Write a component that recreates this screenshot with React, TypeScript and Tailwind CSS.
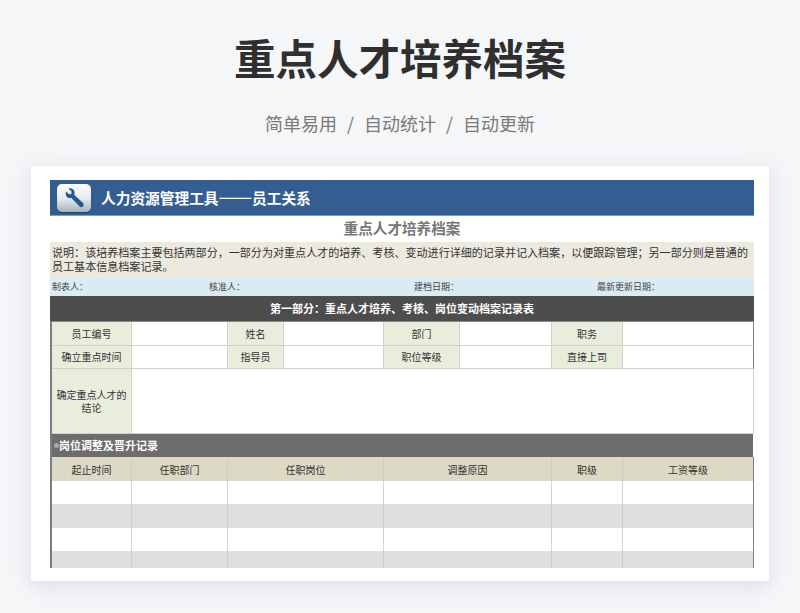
const labelCell = "flex items-center justify-center bg-[#e9eddc] border-r border-b border-[#d0d0d0] text-[10px] text-[#333333] text-center leading-[13.5px]";
const blankCell = "bg-white border-r border-b border-[#d0d0d0]";
const lastCell = "bg-white border-r border-r-[#7d7d7d] border-b border-b-[#d0d0d0]";

const WrenchIcon = () => (
  <div className="w-[34px] h-[28px] rounded-[5px] bg-gradient-to-b from-[#fbfcfd] via-[#e6ebf0] to-[#a9b4be] flex items-center justify-center shadow-[0_1px_1px_rgba(0,0,0,0.35)]">
    <svg width="22" height="22" viewBox="0 0 22 22">
      <path
        d="M3 4.5 L6.5 7.5 L8.5 6.5 L8.5 4.5 L5.5 1.5 C8 0.8 11 2 11.5 5 C11.7 6.2 11.5 7 11.2 7.8 L20 16 C21 17.2 20.8 18.6 20 19.6 C19 20.6 17.6 20.6 16.6 19.6 L8.2 10.8 C7.2 11.2 6 11.2 5 10.8 C3 10 2.4 7 3 4.5 Z"
        fill="#1f5a94"
      />
    </svg>
  </div>
);

const historyColumns = [
  { label: "起止时间", span: "col-span-1" },
  { label: "任职部门", span: "col-span-1" },
  { label: "任职岗位", span: "col-span-2" },
  { label: "调整原因", span: "col-span-2" },
  { label: "职级", span: "col-span-1" },
  { label: "工资等级", span: "col-span-1" },
];

const gridCols = "grid grid-cols-[80px_96px_56px_100px_76px_92px_71px_131px]";

const App = () => {
  return (
    <div
      className="w-[800px] h-[613px] overflow-hidden bg-[#f5f6f8] flex flex-col items-center"
      style={{ fontFamily: '"Noto Sans CJK SC", "Noto Sans", sans-serif' }}
    >
      <h1 className="mt-[27px] h-[60px] leading-[60px] text-[41.5px] font-bold text-[#2f2f2f]">重点人才培养档案</h1>
      <div className="mt-[22px] h-[28px] leading-[28px] flex gap-[10px] text-[18px] text-[#7a7a7a]">
        <span>简单易用</span>
        <span>/</span>
        <span>自动统计</span>
        <span>/</span>
        <span>自动更新</span>
      </div>

      <div className="mt-[29px] w-[738px] h-[415px] bg-white shadow-[0_4px_18px_rgba(150,160,175,0.3)] pt-[14px] pl-[19px]">
        <div className="w-[704px] h-[388px] overflow-hidden">
          <div className="h-[36px] bg-[#345e92] flex items-center pl-[7px] border-b border-[#7f9dbd]">
            <WrenchIcon />
            <span className="ml-[10px] text-[14.7px] font-bold text-white">
              人力资源管理工具<span className="text-[20px] leading-none font-normal">——</span>员工关系
            </span>
          </div>

          <div className="h-[26px] flex items-center justify-center text-[14.6px] font-bold text-[#777777] pb-[2px]">重点人才培养档案</div>

          <div className="h-[36px] bg-[#ece9df] px-[2px] pt-[3px] text-[11.05px] leading-[14px] text-[#333333]">
            说明：该培养档案主要包括两部分，一部分为对重点人才的培养、考核、变动进行详细的记录并记入档案，以便跟踪管理；另一部分则是普通的员工基本信息档案记录。
          </div>

          <div className="h-[18px] bg-[#daebf3] relative flex items-center pl-[2px] text-[9px] text-[#444444]">
            <span className="w-[157px]">制表人：</span>
            <span className="w-[205px]">核准人：</span>
            <span className="w-[183px]">建档日期：</span>
            <span>最新更新日期：</span>
          </div>

          <div className="h-[26px] bg-[#4d4d4d] flex items-center justify-center text-[11px] font-bold text-white border-b border-[#8a8a8a]">
            第一部分：重点人才培养、考核、岗位变动档案记录表
          </div>

          <div className="border-l-2 border-[#7d7d7d]">
            <div className={`${gridCols} grid-rows-[24px_23px_65px]`}>
              <div className={labelCell}>员工编号</div>
              <div className={blankCell} />
              <div className={labelCell}>姓名</div>
              <div className={blankCell} />
              <div className={labelCell}>部门</div>
              <div className={blankCell} />
              <div className={labelCell}>职务</div>
              <div className={lastCell} />

              <div className={labelCell}>确立重点时间</div>
              <div className={blankCell} />
              <div className={labelCell}>指导员</div>
              <div className={blankCell} />
              <div className={labelCell}>职位等级</div>
              <div className={blankCell} />
              <div className={labelCell}>直接上司</div>
              <div className={lastCell} />

              <div className={`${labelCell} px-[3px]`}>确定重点人才的结论</div>
              <div className="col-span-7 bg-white border-r border-b border-[#d0d0d0]" />
            </div>

            <div className="h-[23px] mr-[1px] bg-[#6d6d6d] flex items-center pl-[2px] text-[11px] font-bold text-white">
              <span className="w-[5px] h-[5px] rounded-full bg-[#a9a9a9]" />
              <span>岗位调整及晋升记录</span>
            </div>

            <div className={`${gridCols} grid-rows-[24px_23px_24px_23px_18px]`}>
              {historyColumns.map((col, i) => (
                <div
                  key={col.label}
                  className={
                    i === 5
                      ? `${col.span} flex items-center justify-center bg-[#dcd9c5] border-r border-[#7d7d7d] text-[10px] text-[#333333]`
                      : `${col.span} flex items-center justify-center bg-[#dcd9c5] border-r border-[#cfccb8] text-[10px] text-[#333333]`
                  }
                >
                  {col.label}
                </div>
              ))}
              {[0, 1, 2, 3].map((row) =>
                historyColumns.map((col, i) => (
                  <div
                    key={`${row}-${col.label}`}
                    className={
                      i === 5
                        ? `${col.span} ${row % 2 === 0 ? "bg-white" : "bg-[#dfdfdf]"} border-r border-[#7d7d7d]`
                        : row % 2 === 0
                          ? `${col.span} bg-white border-r border-[#d4d4d4]`
                          : `${col.span} bg-[#dfdfdf] border-r border-[#cccccc]`
                    }
                  />
                ))
              )}
            </div>
          </div>
        </div>
      </div>
    </div>
  );
};

export default App;
